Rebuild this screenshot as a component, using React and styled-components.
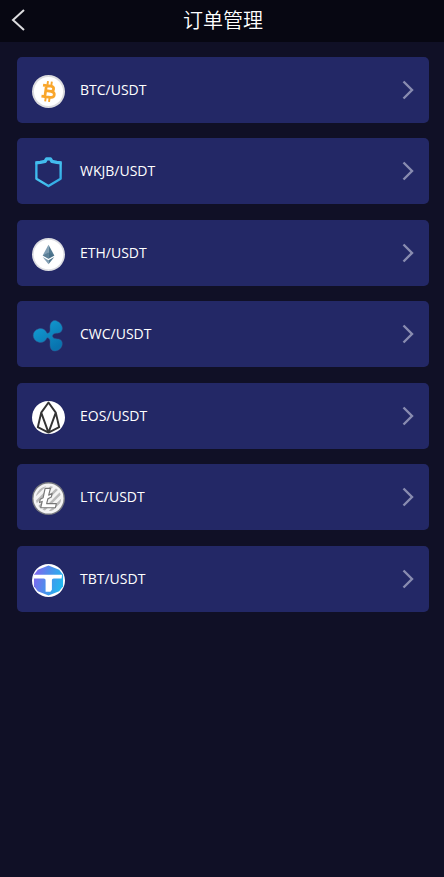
import React from 'react'
import styled, { createGlobalStyle } from 'styled-components'

const GlobalStyle = createGlobalStyle`
    * {
        box-sizing: border-box;
    }

    body {
        margin: 0;
        background-color: #101026;
        color: #fff;
        font-family: "Open Sans", "Noto Sans CJK SC", sans-serif;
    }
`

const Header = styled.header`
    display: grid;
    grid-template-columns: 44px 1fr 44px;
    align-items: center;
    height: 42px;
    background-color: #070712;
`

const BackButton = styled.button`
    display: flex;
    align-items: center;
    height: 40px;
    padding: 0 0 2px 11px;
    border: 0;
    background: none;
    color: #dcdcdf;
    cursor: pointer;
`

const Title = styled.h1`
    margin: 0;
    padding: 0 0 2px 2px;
    font-family: "Noto Sans CJK SC", sans-serif;
    font-size: 20px;
    line-height: 28px;
    font-weight: 350;
    text-align: center;
`

const List = styled.ul`
    list-style: none;
    margin: 0;
    padding: 15px 15px 15px 17px;
`

const Item = styled.li`
    margin-bottom: 15px;

    &:nth-child(even) {
        margin-bottom: 16px;
    }
`

const Row = styled.a`
    display: flex;
    align-items: center;
    height: 66px;
    padding: 0 15px;
    border-radius: 5px;
    background-color: #232866;
    color: #fff;
    text-decoration: none;
`

const CoinIcon = styled.svg`
    flex: none;
    width: 33px;
    height: 33px;
    margin: 3px 15px 0 0;
`

const Pair = styled.span`
    flex: 1;
    font-size: 14px;
    line-height: 20px;
    font-weight: 400;
`

const Arrow = styled.svg`
    flex: none;
    width: 12px;
    height: 20px;
    color: #898cb0;
`

function Btc() {
    return (
        <>
            <circle cx="17" cy="17" r="17" fill="#dcdcdf" />
            <circle cx="17" cy="17" r="15" fill="#fff" />
            <g transform="rotate(8 17 17)" fill="none" stroke="#f9a62b" strokeWidth="2.8">
                <path d="M10.500 11.200h8c4.500 0 4.500 5.300 0 5.300h-4h5c5.200 0 5.200 6.300 0 6.300h-9M14 11.500v11" />
                <path d="M15 6.500v4M19 6.500v4M15 23v4.500M19 23v4.500" strokeWidth="2" />
            </g>
        </>
    )
}

function Wkjb() {
    return (
        <>
            <defs>
                <linearGradient id="wkjb" x1="0" y1="0" x2="1" y2="1">
                    <stop offset="0" stopColor="#36aee9" />
                    <stop offset="0.5" stopColor="#48c8f2" />
                    <stop offset="1" stopColor="#299fdf" />
                </linearGradient>
            </defs>
            <path
                d="M4.500 6.500V23.500L17 31l12.500-7.500V6.500"
                fill="none"
                stroke="url(#wkjb)"
                strokeWidth="2.400"
                strokeLinejoin="round"
            />
            <path
                d="M3.500 7l5-.5 5-1 1.500-2.500h4l1.500 2.500 5 1 5 .5"
                fill="none"
                stroke="#43bced"
                strokeWidth="3.400"
                strokeLinejoin="round"
            />
        </>
    )
}

function Eth() {
    return (
        <>
            <circle cx="17" cy="17" r="17" fill="#dcdde2" />
            <circle cx="17" cy="17" r="15.300" fill="#fff" />
            <path d="M17 7l-6 11 6 3.500z" fill="#809eb4" />
            <path d="M17 7l6 11-6 3.500z" fill="#527991" />
            <path d="M11 18l6-3 6 3-6 3.500z" fill="#456c86" opacity="0.6" />
            <path d="M11 19.500l6 3.500v4z" fill="#829fb4" />
            <path d="M23 19.500l-6 3.500v4z" fill="#527991" />
        </>
    )
}

function Cwc() {
    return (
        <>
            <defs>
                <linearGradient id="cwc" x1="0" y1="0" x2="0.6" y2="1">
                    <stop offset="0" stopColor="#14a2d8" />
                    <stop offset="1" stopColor="#0873ae" />
                </linearGradient>
            </defs>
            <path
                d="M18.500 8.500c0-5.500 3.500-8 7-6.500 5 2 7 7 5 10.300-2 3.600-6.800 1.200-8.800 3.700-.8 1-.8 2 0 3 2 2.500 6.800.2 8.800 3.700 1.900 3.300-.2 8.500-5 10-3.500 1.200-7-.8-7-6.500 0-3 .8-6.500-3-7-2 4.500-5.500 5.500-8.500 4.700-7.700-2-7.700-11.800 0-13.800 3-.8 6.500.2 8.500 4.700 3.800-.5 3-3.300 3-6.300z"
                fill="url(#cwc)"
                stroke="#3b568c"
                strokeWidth="0.5"
            />
        </>
    )
}

function Eos() {
    return (
        <>
            <circle cx="17" cy="17" r="17" fill="#fff" />
            <path
                d="M17 1.500L9.500 12 6 27 17 32.500 28 27 24.500 12zM9.500 12L17 32.500l7.500-20.500"
                fill="none"
                stroke="#343434"
                strokeWidth="2"
                strokeLinejoin="round"
            />
        </>
    )
}

function Ltc() {
    return (
        <>
            <defs>
                <clipPath id="ltcDisc">
                    <circle cx="17" cy="17" r="13" />
                </clipPath>
            </defs>
            <circle cx="17" cy="17" r="17" fill="#777980" />
            <circle cx="17" cy="17" r="15.500" fill="#f4f4f4" />
            <path
                d="M0 17L17 0M1 24L24 1M5 28L28 5M8 33L33 8M15 34L34 15"
                stroke="#bababa"
                strokeWidth="2.500"
                clipPath="url(#ltcDisc)"
            />
            <path
                d="M13.500 6.500h5.500l-1.800 7 3.500-1.700-.8 3.700-3.500 1.700-1.300 5.100h10l-1 4.200H9l1.500-6.500-2.800 1.200.8-3.500 3-1.500z"
                fill="#fff"
                stroke="#777"
                strokeWidth="1.200"
                strokeLinejoin="round"
            />
        </>
    )
}

function Tbt() {
    return (
        <>
            <defs>
                <linearGradient id="tbt" x1="0" y1="0.3" x2="1" y2="0.6">
                    <stop offset="0" stopColor="#8166ed" />
                    <stop offset="0.5" stopColor="#4a91ec" />
                    <stop offset="1" stopColor="#20b9ef" />
                </linearGradient>
            </defs>
            <circle cx="17" cy="17" r="17" fill="#fff" />
            <path d="M17 1.500l11 4.500 4 5v12l-4 5-11 4.500L6 28l-4-5V11l4-5z" fill="url(#tbt)" />
            <path d="M2 11h29l-.5 4h-8c-1.500 0-2 .8-2 2v9.500L19 28.500h-5V17c0-1.200-.5-2-2-2H2z" fill="#fff" />
        </>
    )
}

const coins = [
    { pair: 'BTC/USDT', Logo: Btc },
    { pair: 'WKJB/USDT', Logo: Wkjb },
    { pair: 'ETH/USDT', Logo: Eth },
    { pair: 'CWC/USDT', Logo: Cwc },
    { pair: 'EOS/USDT', Logo: Eos },
    { pair: 'LTC/USDT', Logo: Ltc },
    { pair: 'TBT/USDT', Logo: Tbt },
]

function App() {
    return (
        <>
            <GlobalStyle />
            <Header>
                <BackButton type="button" aria-label="返回">
                    <svg width="14" height="22" viewBox="0 0 14 22" fill="none" stroke="currentColor" strokeWidth="2">
                        <path d="M13 1L2 11l11 10" />
                    </svg>
                </BackButton>
                <Title>订单管理</Title>
            </Header>
            <List>
                {coins.map(({ pair, Logo }) => (
                    <Item key={pair}>
                        <Row href={`#${pair}`}>
                            <CoinIcon viewBox="0 0 34 34" aria-hidden="true">
                                <Logo />
                            </CoinIcon>
                            <Pair>{pair}</Pair>
                            <Arrow viewBox="0 0 12 20" fill="none" stroke="currentColor" strokeWidth="2.400" aria-hidden="true">
                                <path d="M1.500 1.500l8.500 8.500-8.500 8.500" />
                            </Arrow>
                        </Row>
                    </Item>
                ))}
            </List>
        </>
    )
}

export default App
